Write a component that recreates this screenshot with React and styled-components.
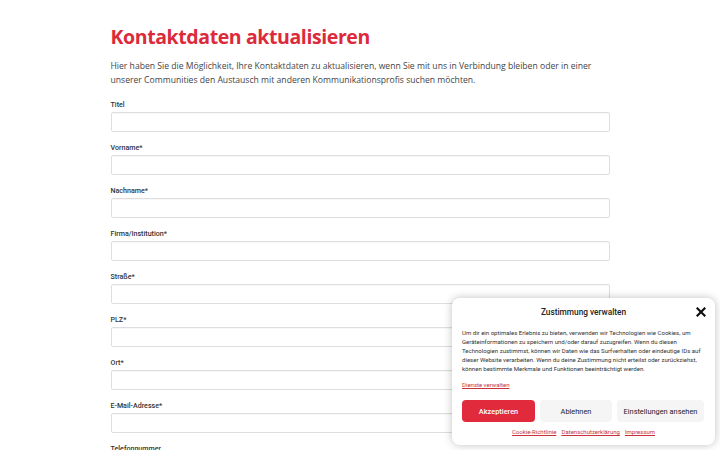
import React from "react";
import styled, { createGlobalStyle } from "styled-components";

const Global = createGlobalStyle`
  html, body { margin: 0; padding: 0; background: #fff; }
  body { font-family: "Roboto", "Liberation Sans", sans-serif; color: #333; overflow: hidden; }
  * { box-sizing: border-box; }
`;

const Page = styled.div`
  width: 720px;
  height: 450px;
  overflow: hidden;
  position: relative;
`;

const Container = styled.main`
  width: 499px;
  margin: 0 auto;
  padding-top: 24px;
`;

const Heading = styled.h1`
  margin: 0;
  font-family: "Open Sans", "Liberation Sans", sans-serif;
  font-weight: 700;
  font-size: 19.5px;
  line-height: 26px;
  color: #dc2a3b;
  letter-spacing: -0.4px;
`;

const Intro = styled.p`
  margin: 9px 0 0;
  font-family: "Open Sans", "Liberation Sans", sans-serif;
  font-size: 8.62px;
  line-height: 14px;
  color: #444;
`;

const Form = styled.form`
  display: flex;
  flex-direction: column;
  gap: 11px;
  margin-top: 12.5px;
`;

const Field = styled.div`
  display: flex;
  flex-direction: column;
  gap: 3px;
`;

const Label = styled.label`
  font-family: "Roboto", sans-serif;
  font-weight: 500;
  font-size: 7.1px;
  line-height: 9px;
  color: #333;
`;

const Input = styled.input`
  width: 100%;
  height: 20px;
  border: 1px solid #dedede;
  border-radius: 2px;
  background: #fff;
  box-shadow: inset 0 1px 1px rgba(0, 0, 0, 0.03);
  outline: none;
`;

const Banner = styled.aside`
  position: absolute;
  right: 5px;
  bottom: 5px;
  width: 263px;
  height: 147px;
  background: #fff;
  border-radius: 8px;
  box-shadow: 0 0 8px rgba(0, 0, 0, 0.25);
  padding: 6px 10px 0;
  display: flex;
  flex-direction: column;
  font-family: "Roboto", sans-serif;
`;

const BannerHead = styled.div`
  display: flex;
  align-items: center;
  justify-content: center;
  position: relative;
  height: 16px;
`;

const BannerTitle = styled.div`
  font-size: 8.3px;
  font-weight: 500;
  color: #222;
`;

const Close = styled.button`
  position: absolute;
  right: -1px;
  top: 3px;
  width: 10px;
  height: 10px;
  border: none;
  background: none;
  padding: 0;
  cursor: pointer;
  display: flex;
`;

const BannerText = styled.p`
  margin: 8px 0 0;
  font-size: 6.05px;
  line-height: 9px;
  color: #333;
  white-space: nowrap;
`;

const ManageLink = styled.a`
  margin-top: 8px;
  font-size: 6px;
  line-height: 8px;
  color: #c8323f;
  text-decoration: underline;
`;

const Buttons = styled.div`
  display: flex;
  gap: 5px;
  margin-top: 11px;
`;

const Btn = styled.button`
  height: 22px;
  width: ${(p) => p.$w}px;
  border: none;
  border-radius: 4px;
  font-family: "Roboto", sans-serif;
  font-size: 7.4px;
  font-weight: ${(p) => (p.$primary ? 500 : 400)};
  color: ${(p) => (p.$primary ? "#fff" : "#222")};
  background: ${(p) => (p.$primary ? "#e12a3b" : "#f5f5f5")};
  padding: 0;
`;

const Links = styled.div`
  display: flex;
  justify-content: center;
  gap: 5px;
  margin-top: 5px;
`;

const SmallLink = styled.a`
  font-size: 6px;
  line-height: 10px;
  color: #c8323f;
  text-decoration: underline;
`;

const fields = [
  "Titel",
  "Vorname*",
  "Nachname*",
  "Firma/Institution*",
  "Straße*",
  "PLZ*",
  "Ort*",
  "E-Mail-Adresse*",
  "Telefonnummer",
];

export default function App() {
  return (
    <Page>
      <Global />
      <Container>
        <Heading>Kontaktdaten aktualisieren</Heading>
        <Intro>
          Hier haben Sie die Möglichkeit, Ihre Kontaktdaten zu aktualisieren, wenn Sie mit uns in Verbindung bleiben oder in einer
          <br />
          unserer Communities den Austausch mit anderen Kommunikationsprofis suchen möchten.
        </Intro>
        <Form>
          {fields.map((f) => (
            <Field key={f}>
              <Label>{f}</Label>
              <Input type="text" />
            </Field>
          ))}
        </Form>
      </Container>
      <Banner>
        <BannerHead>
          <BannerTitle>Zustimmung verwalten</BannerTitle>
          <Close aria-label="Schließen">
            <svg width="10" height="10" viewBox="0 0 10 10">
              <path d="M1.5 1.5 L8.5 8.5 M8.5 1.5 L1.5 8.5" stroke="#111" strokeWidth="2.2" strokeLinecap="square" />
            </svg>
          </Close>
        </BannerHead>
        <BannerText>
          Um dir ein optimales Erlebnis zu bieten, verwenden wir Technologien wie Cookies, um
          <br />
          Geräteinformationen zu speichern und/oder darauf zuzugreifen. Wenn du diesen
          <br />
          Technologien zustimmst, können wir Daten wie das Surfverhalten oder eindeutige IDs auf
          <br />
          dieser Website verarbeiten. Wenn du deine Zustimmung nicht erteilst oder zurückziehst,
          <br />
          können bestimmte Merkmale und Funktionen beeinträchtigt werden.
        </BannerText>
        <ManageLink href="#">Dienste verwalten</ManageLink>
        <Buttons>
          <Btn $primary $w={73}>Akzeptieren</Btn>
          <Btn $w={72}>Ablehnen</Btn>
          <Btn $w={87}>Einstellungen ansehen</Btn>
        </Buttons>
        <Links>
          <SmallLink href="#">Cookie-Richtlinie</SmallLink>
          <SmallLink href="#">Datenschutzerklärung</SmallLink>
          <SmallLink href="#">Impressum</SmallLink>
        </Links>
      </Banner>
    </Page>
  );
}
